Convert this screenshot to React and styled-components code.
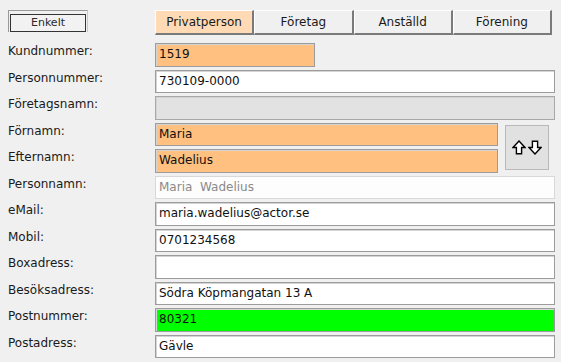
import React from "react";
import styled, { createGlobalStyle, css } from "styled-components";

const Global = createGlobalStyle`
  html, body { margin: 0; padding: 0; background: #f0f0f0; }
  body { font-family: "DejaVu Sans", Verdana, sans-serif; font-size: 12px; color: #111; }
`;

const Page = styled.div`
  width: 561px;
  height: 362px;
  box-sizing: border-box;
  padding: 10px 6px 0 8px;
  background: #f0f0f0;
  overflow: hidden;
`;

const TopBar = styled.div`
  display: grid;
  grid-template-columns: 147px 1fr;
  align-items: start;
  height: 33px;
`;

const ModeFrame = styled.div`
  width: 80px;
  box-sizing: border-box;
  border-top: 1px solid #9a9a9a;
  border-left: 1px solid #9a9a9a;
  border-right: 1px solid #c8c8c8;
  padding: 3px 1px 0 1px;
`;

const ModeButton = styled.div`
  height: 18px;
  box-sizing: border-box;
  border: 1px solid #333;
  background: #f2f2f2;
  font-size: 11px;
  line-height: 16px;
  color: #2a2a2a;
  text-align: center;
`;

const Tabs = styled.div`
  display: flex;
  width: 397px;
`;

const Tab = styled.div`
  flex: 1;
  height: 25px;
  box-sizing: border-box;
  border-top: 1px solid #fdfdfd;
  border-left: 1px solid #fdfdfd;
  border-right: 2px solid #7a7a7a;
  border-bottom: 2px solid #7a7a7a;
  background: ${(p) => (p.$active ? "#ffdab4" : "#f0f0f0")};
  text-align: center;
  line-height: 22px;
  font-size: 12px;
  color: #1a1a1a;
`;

const Form = styled.div`
  display: grid;
  grid-template-columns: 147px 343px 57px;
  grid-auto-rows: 23.5px;
  row-gap: 3px;
`;

const Label = styled.div`
  grid-column: 1;
  font-size: 12px;
  line-height: 14px;
  margin-top: 1px;
  color: #1a1a1a;
  white-space: nowrap;
`;

const variants = {
  white: css`background: #fff; border-color: #9c9c9c;`,
  orange: css`background: #ffc080; border-color: #9c9c9c;`,
  green: css`background: #00ff00; border-color: #9c9c9c;`,
  disabled: css`background: #e2e2e2; border-color: #a8a8a8;`,
  readonly: css`background: #fdfdfd; border-color: #d8d8d8; color: #8a8a8a; box-shadow: none;`,
};

const Field = styled.div`
  grid-column: ${(p) => (p.$narrow ? "2" : "2 / 4")};
  width: ${(p) => (p.$width ? p.$width + "px" : "auto")};
  box-sizing: border-box;
  border: 1px solid #9c9c9c;
  box-shadow: inset 1px 1px 0 #d4d4d4;
  padding: 0 3px;
  font-size: 12px;
  line-height: 21.5px;
  color: #111;
  white-space: nowrap;
  overflow: hidden;
  ${(p) => variants[p.$variant || "white"]}
`;

const SwapButton = styled.div`
  grid-column: 3;
  grid-row: span 2;
  align-self: center;
  justify-self: end;
  margin-right: 6px;
  width: 44px;
  height: 45px;
  box-sizing: border-box;
  background: #e1e1e1;
  border: 1px solid #b9b9b9;
  display: flex;
  align-items: center;
  justify-content: center;
  gap: 2px;
`;

const Arrow = ({ down }) => (
  <svg width="14" height="15" viewBox="0 0 14 15">
    <path
      d="M7 1 L13 7.5 L9.6 7.5 L9.6 13.8 L4.4 13.8 L4.4 7.5 L1 7.5 Z"
      fill="#fff"
      stroke="#000"
      strokeWidth="1.4"
      strokeLinejoin="miter"
      transform={down ? "rotate(180 7 7.5)" : undefined}
    />
  </svg>
);

const rows = [
  { label: "Kundnummer:", value: "1519", variant: "orange", width: 160, narrow: true },
  { label: "Personnummer:", value: "730109-0000" },
  { label: "Företagsnamn:", value: "", variant: "disabled" },
];

const rowsAfter = [
  { label: "Personnamn:", value: "Maria  Wadelius", variant: "readonly" },
  { label: "eMail:", value: "maria.wadelius@actor.se" },
  { label: "Mobil:", value: "0701234568" },
  { label: "Boxadress:", value: "" },
  { label: "Besöksadress:", value: "Södra Köpmangatan 13 A" },
  { label: "Postnummer:", value: "80321", variant: "green" },
  { label: "Postadress:", value: "Gävle" },
];

const renderRow = (r) => (
  <React.Fragment key={r.label}>
    <Label>{r.label}</Label>
    <Field $variant={r.variant} $width={r.width} $narrow={r.narrow}>
      {r.value.replace(/ {2}/g, "\u00a0 ")}
    </Field>
  </React.Fragment>
);

export default function App() {
  return (
    <Page>
      <Global />
      <TopBar>
        <ModeFrame>
          <ModeButton>Enkelt</ModeButton>
        </ModeFrame>
        <Tabs>
          <Tab $active>Privatperson</Tab>
          <Tab>Företag</Tab>
          <Tab>Anställd</Tab>
          <Tab>Förening</Tab>
        </Tabs>
      </TopBar>
      <Form>
        {rows.map(renderRow)}
        <Label>Förnamn:</Label>
        <Field $variant="orange" $narrow>Maria</Field>
        <SwapButton>
          <Arrow />
          <Arrow down />
        </SwapButton>
        <Label>Efternamn:</Label>
        <Field $variant="orange" $narrow>Wadelius</Field>
        {rowsAfter.map(renderRow)}
      </Form>
    </Page>
  );
}
